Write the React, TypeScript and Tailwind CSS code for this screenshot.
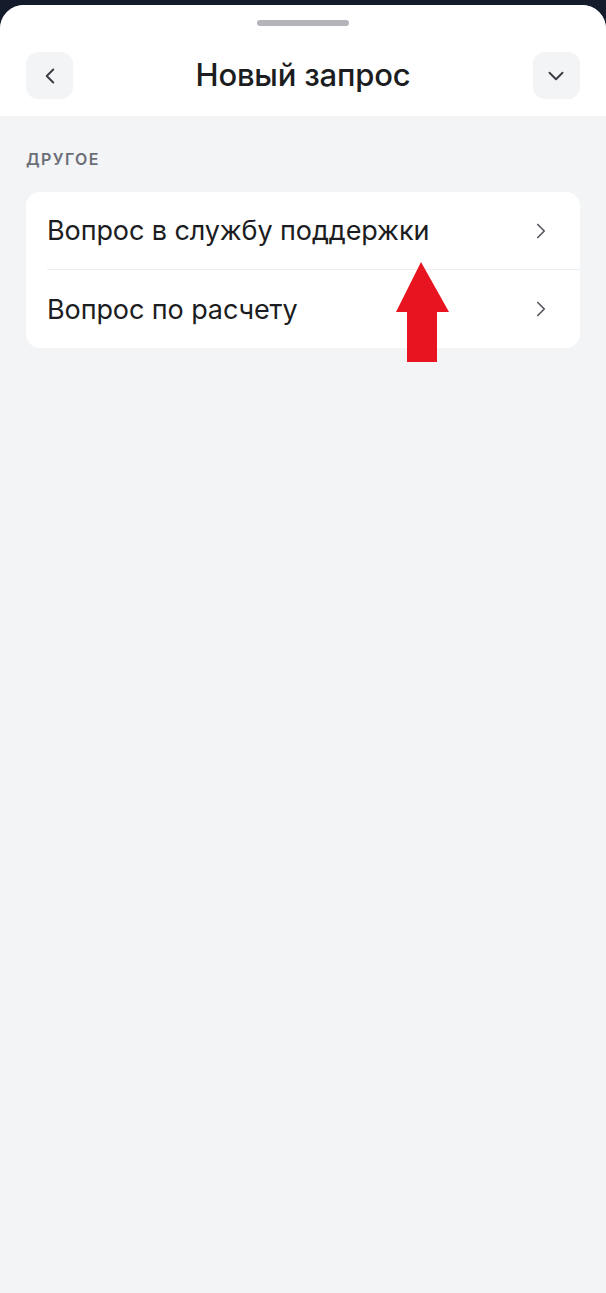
import { ChevronLeft, ChevronDown, ChevronRight } from "lucide-react";

const rows = ["Вопрос в службу поддержки", "Вопрос по расчету"];

export default function App() {
  return (
    <div className="relative h-[1293px] w-[606px] overflow-hidden bg-[#141b2b] font-['Inter',sans-serif]">
      <div className="mt-[5px] h-[1288px] rounded-t-[24px] bg-[#f3f4f6] overflow-hidden">
        <div className="bg-white h-[111px] pt-[15px]">
          <div className="mx-auto h-[6px] w-[92px] rounded-full bg-[#b4b5ba]" />
          <div className="mt-[26px] flex items-center justify-between px-[26px]">
            <button className="flex h-[47px] w-[47px] items-center justify-center rounded-[12px] bg-[#f3f4f6] text-[#3a3d44]">
              <ChevronLeft size={26} strokeWidth={1.8} />
            </button>
            <h1 className="text-[31px] font-medium text-[#1c1d21] tracking-[-0.2px]">Новый запрос</h1>
            <button className="flex h-[47px] w-[47px] items-center justify-center rounded-[12px] bg-[#f3f4f6] text-[#3a3d44]">
              <ChevronDown size={26} strokeWidth={1.8} />
            </button>
          </div>
        </div>
        <div className="px-[26px] pt-[31px]">
          <div className="text-[16px] font-semibold text-[#6b6e76] tracking-[1.4px]">ДРУГОЕ</div>
          <div className="mt-[21px] rounded-[14px] bg-white">
            {rows.map((r, i) => (
              <div key={r} className={`ml-[21px] flex h-[78px] items-center justify-between pr-[26px] ${i === 0 ? "border-b border-[#eceef1]" : ""}`}>
                <span className="pt-[2px] text-[27px] text-[#1c1d21] tracking-[-0.1px]">{r}</span>
                <ChevronRight size={26} strokeWidth={1.6} className="text-[#55585f]" />
              </div>
            ))}
          </div>
        </div>
      </div>
      <svg className="absolute left-[394px] top-[260px]" width="58" height="104" viewBox="0 0 58 104">
        <path d="M27 2 L55 52 L43 52 L43 102 L13 102 L13 52 L2 52 Z" fill="#e8141f" />
      </svg>
    </div>
  );
}
